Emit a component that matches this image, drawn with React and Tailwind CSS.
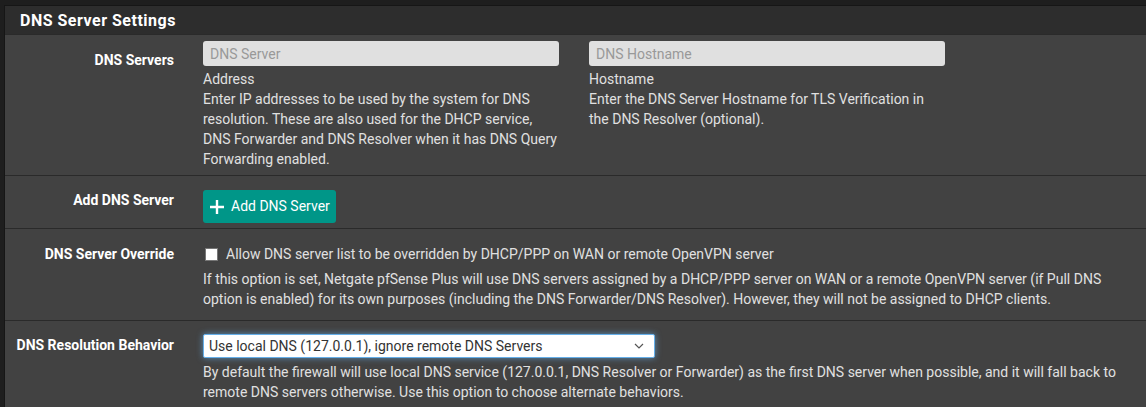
export default function App() {
  return (
    <div className="min-h-screen bg-[#1e1e1e] pl-[4px] pt-[5px] font-['Roboto',sans-serif] text-[14px] text-[#e0e0e0]">
      <div className="border border-[#161616] border-r-0 bg-[#424242]">
        <div className="h-[29px] border-b border-[#2a2a2a] bg-[#2d2d2d] pl-[15px] pt-[3px] text-[16px] font-bold tracking-[0.5px] text-white">
          DNS Server Settings
        </div>

        {/* DNS Servers */}
        <div className="flex border-b border-[#2a2a2a] pb-[6px] pt-[6px]">
          <div className="w-[184px] shrink-0 pr-[15px] pt-[9px] text-right font-bold text-white">DNS Servers</div>
          <div className="flex gap-[30px] pl-[14px]">
            <div className="w-[356px]">
              <input
                placeholder="DNS Server"
                className="h-[25px] w-full rounded-[3px] bg-[#e0e0e0] px-[7px] text-[14px] text-[#333] placeholder-[#999] outline-none"
              />
              <div className="mt-[3px] leading-[20px]">Address</div>
              <div className="leading-[20px]">
                Enter IP addresses to be used by the system for DNS resolution. These are also used for the DHCP service,
                DNS Forwarder and DNS Resolver when it has DNS Query Forwarding enabled.
              </div>
            </div>
            <div className="w-[356px]">
              <input
                placeholder="DNS Hostname"
                className="h-[25px] w-full rounded-[3px] bg-[#e0e0e0] px-[7px] text-[14px] text-[#333] placeholder-[#999] outline-none"
              />
              <div className="mt-[3px] leading-[20px]">Hostname</div>
              <div className="leading-[20px]">
                Enter the DNS Server Hostname for TLS Verification in the DNS Resolver (optional).
              </div>
            </div>
          </div>
        </div>

        {/* Add DNS Server */}
        <div className="flex border-b border-[#2a2a2a] pb-[5px] pt-[14px]">
          <div className="w-[184px] shrink-0 pr-[15px] text-right font-bold text-white">Add DNS Server</div>
          <div className="pl-[14px]">
            <button className="flex h-[33px] items-center gap-[6px] rounded-[3px] bg-[#009688] pl-[6px] pr-[6px] text-[14px] text-white">
              <svg width="16" height="16" viewBox="0 0 16 16">
                <path d="M8 1v14M1 8h14" stroke="white" strokeWidth="2.4" />
              </svg>
              Add DNS Server
            </button>
          </div>
        </div>

        {/* DNS Server Override */}
        <div className="flex border-b border-[#2a2a2a] pb-[11px] pt-[15px]">
          <div className="w-[184px] shrink-0 pr-[15px] text-right font-bold text-white">DNS Server Override</div>
          <div className="pl-[14px] pr-[20px]">
            <label className="flex items-center gap-[8px] leading-[20px]">
              <span className="ml-[2px] h-[13px] w-[13px] border border-[#777] bg-white" />
              Allow DNS server list to be overridden by DHCP/PPP on WAN or remote OpenVPN server
            </label>
            <div className="mt-[5px] leading-[20px]">
              If this option is set, Netgate pfSense Plus will use DNS servers assigned by a DHCP/PPP server on WAN or a remote
              OpenVPN server (if Pull DNS option is enabled) for its own purposes (including the DNS Forwarder/DNS Resolver).
              However, they will not be assigned to DHCP clients.
            </div>
          </div>
        </div>

        {/* DNS Resolution Behavior */}
        <div className="flex pb-[10px] pt-[13px]">
          <div className="w-[184px] shrink-0 pr-[15px] pt-[1px] text-right font-bold text-white">DNS Resolution Behavior</div>
          <div className="pl-[14px] pr-[20px]">
            <div className="flex h-[24px] w-[452px] items-center justify-between rounded-[2px] border border-[#66afe9] bg-white pl-[5px] pr-[10px] text-[#333] shadow-[0_0_6px_rgba(102,175,233,0.7)]">
              <span>Use local DNS (127.0.0.1), ignore remote DNS Servers</span>
              <svg width="10" height="6" viewBox="0 0 10 6">
                <path d="M1 1l4 4 4-4" fill="none" stroke="#555" strokeWidth="1.2" />
              </svg>
            </div>
            <div className="mt-[4px] leading-[20px]">
              By default the firewall will use local DNS service (127.0.0.1, DNS Resolver or Forwarder) as the first DNS server
              when possible, and it will fall back to remote DNS servers otherwise. Use this option to choose alternate behaviors.
            </div>
          </div>
        </div>
      </div>
    </div>
  );
}
